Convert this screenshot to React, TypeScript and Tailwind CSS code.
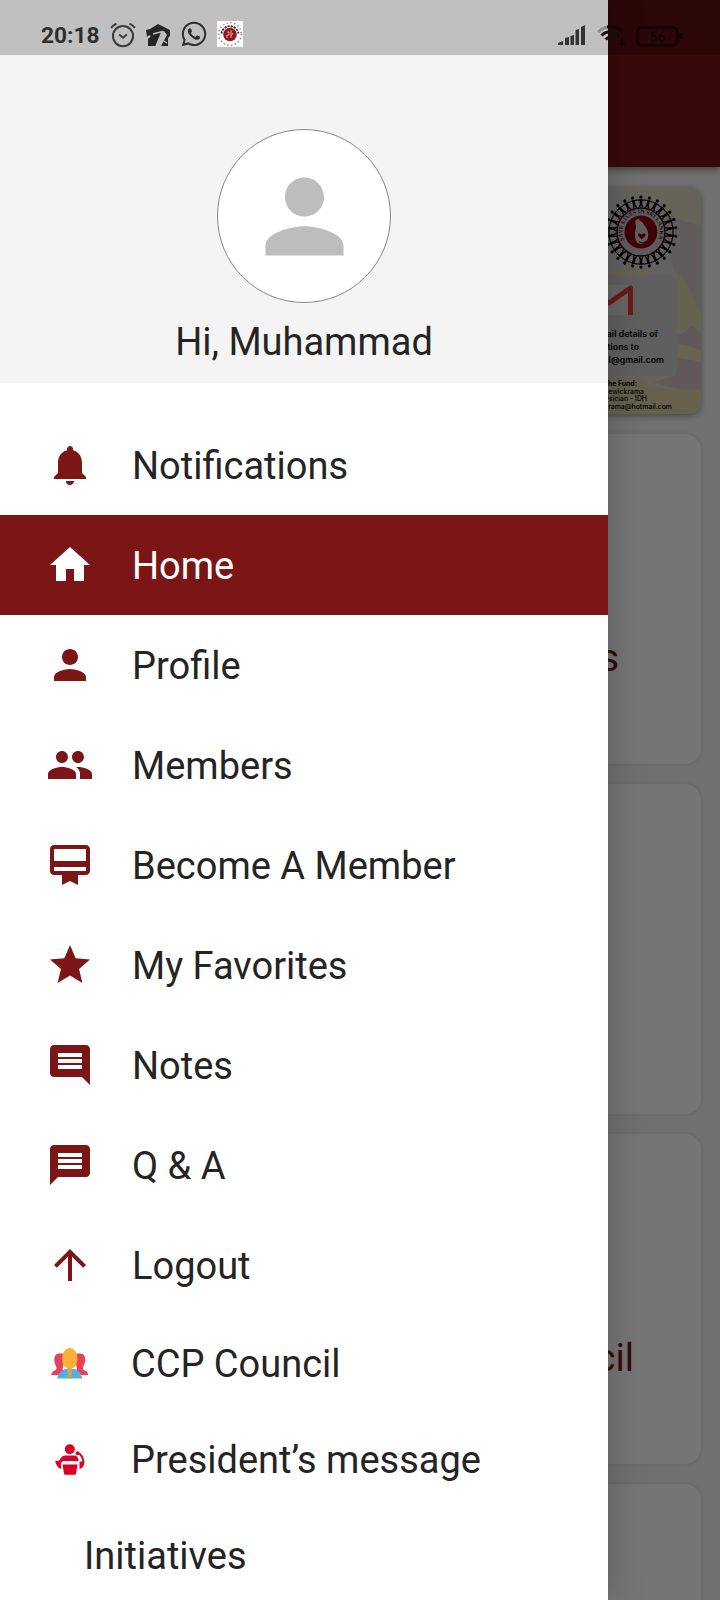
import type { ReactNode } from "react";
import {
  MdArrowUpward,
  MdCardMembership,
  MdComment,
  MdHome,
  MdMessage,
  MdNotifications,
  MdPeople,
  MdPerson,
  MdStar,
} from "react-icons/md";
import { FaWhatsapp } from "react-icons/fa";

function CouncilIcon() {
  return (
    <svg viewBox="0 0 38 31" className="h-[31px] w-[38px]">
      <path
        d="M9 5.500C5 5 3 8 3.300 12.500c.3 4 2.500 6 2.200 8C5 23.500.5 22 .3 27h36.900c-.2-5-4.700-3.500-5.200-6.500-.3-2 1.900-4 2.200-8C34.500 8 32.500 5 28.500 5.500z"
        fill="#e9405c"
      />
      <path d="M12.500 16h12.500l1 5.500-7.200 3-7.300-3z" fill="#fff" />
      <path d="M6 30.500c1.500-5 4-8 8-9.500h9.500c4.500 1.500 6.500 4.500 8 9.500z" fill="#55aee0" />
      <path d="M16.500 18h4.500v12.500h-4.500z" fill="#c2a765" />
      <ellipse cx="18.800" cy="10.500" rx="7.800" ry="10.500" fill="#f9b233" />
    </svg>
  );
}

function PresidentIcon() {
  return (
    <svg viewBox="0 0 30 31" className="h-[31px] w-[30px]" fill="#d80027">
      <circle cx="14.800" cy="5.200" r="5" />
      <path d="M10 11.500h10c2 0 3 2 3.800 5.500H9c-2 0-3 1-3 3v5c-3-1-5-4-5.800-8l4.300-.5c1-3 3-5 5.500-5z" />
      <path d="M7.500 20.500h15l-1.500 9a1.500 1.500 0 0 1-1.500 1.300h-9A1.500 1.500 0 0 1 9 29.500z" />
      <path d="M24.500 25v-7.500h4.800c0 4-1.300 6.500-4.800 7.500z" />
      <path d="M23 9c4 2 5 5 5.500 9" fill="none" stroke="#d80027" strokeWidth="2" />
      <circle cx="22.500" cy="9.200" r="1.900" />
    </svg>
  );
}

type Item = { label: string; icon: ReactNode; active?: boolean; short?: boolean };

const items: Item[] = [
  { label: "Notifications", icon: <MdNotifications size={48} /> },
  { label: "Home", icon: <MdHome size={48} />, active: true },
  { label: "Profile", icon: <MdPerson size={48} /> },
  { label: "Members", icon: <MdPeople size={48} /> },
  { label: "Become A Member", icon: <MdCardMembership size={48} /> },
  { label: "My Favorites", icon: <MdStar size={48} /> },
  { label: "Notes", icon: <MdComment size={48} /> },
  { label: "Q & A", icon: <MdMessage size={48} /> },
  { label: "Logout", icon: <MdArrowUpward size={48} /> },
  { label: "CCP Council", icon: <CouncilIcon />, short: true },
  { label: "President’s message", icon: <PresidentIcon />, short: true },
];

function MenuRow({ item }: { item: Item }) {
  return (
    <div
      className={`flex items-center pl-[46px] ${item.short ? "h-24" : "h-[100px]"} ${
        item.active ? "bg-[#7b1516] text-white" : "text-[#242424]"
      }`}
    >
      <span
        className={`flex size-12 items-center justify-center ${
          item.active ? "text-white" : "text-[#7b1516]"
        }`}
      >
        {item.icon}
      </span>
      <span className={`pt-0.5 ${item.short ? "ml-[37px]" : "ml-[38px]"}`}>{item.label}</span>
    </div>
  );
}

const people = Array.from({ length: 26 }, (_, i) => (i * 360) / 26);

function Emblem() {
  return (
    <svg viewBox="-37 -37 74 74" className="size-[74px]">
      {people.map((a) => (
        <g key={a} transform={`rotate(${a})`} stroke="#000" strokeWidth="1.500" fill="none">
          <circle cx="0" cy="-35" r="1.600" fill="#000" stroke="none" />
          <path d="M-3.800-31.800L0-32.200l3.800.4" strokeWidth="1.200" />
          <path d="M0-33v5" strokeWidth="2.600" />
          <path d="M-1.700-24.500L0-29l1.700 4.500" />
        </g>
      ))}
      <circle r="24" fill="#cfc6ca" stroke="#3a0508" strokeWidth="1.500" />
      <circle r="16.500" fill="#8e0410" />
      <path
        d="M-5-12c2-2 4-1 4 1 2 0 3 2 4 4 3 3 5 8 4 12-1 5-4 7-7 7-5 0-6-5-6-10 0-4 1-5 1-8-1-3-1-5 0-6z"
        fill="#d3cccd"
      />
      <path d="M-3 2c1.500-1.500 3 0 3.500 1C1 2 3 .5 4.500 2 5 4.500 2 5.500.8 7.500-.5 5.500-3.500 4.500-3 2z" fill="#7e0010" />
      <path d="M-2 9.500c2 1.500 5 1.500 7 0" stroke="#333" strokeWidth="1.200" fill="none" />
      <defs>
        <path id="ring" d="M-17 8A18.800 18.800 0 1 1 17 8" />
      </defs>
      <text fontSize="5.600" fontWeight="700" fill="#222" fontFamily="Liberation Serif, serif">
        <textPath href="#ring" textLength="74">
          SAVE LIVES IN SRI LANKA
        </textPath>
      </text>
    </svg>
  );
}

function Banner() {
  return (
    <div className="relative h-[227px] w-full overflow-hidden rounded-xl bg-[#dbd3d3] shadow-[0_2px_6px_rgba(0,0,0,0.35)]">
      <svg viewBox="0 0 140 227" className="absolute top-0 right-0 h-[227px] w-[140px]">
        <path d="M60 0h80v38c-14-2-24-6-34-14S80 8 60 0z" fill="#dfd8bf" />
        <path d="M106 24c10 8 20 12 34 14v92c-14-14-22-32-28-50-4-14-8-36-6-56z" fill="#d6c6c9" />
        <path d="M47 88c8-4 14-8 22-8s16 4 24 8z" fill="#dfd6b0" />
        <path d="M114 84c12 10 20 26 26 44v18c-6-2-8-8-12-6s-6 8-14 0z" fill="#dfd6b0" />
        <path d="M128 141c4-4 8 2 12 5v22l-24-8v-12c6 0 9-4 12-7z" fill="#d3bfc3" />
        <path d="M114 157c10 0 18 4 26 6v12c-10-2-18-4-26-4z" fill="#e2d9b0" />
        <path d="M114 171c8 0 16 2 26 4v28c-20 2-34-4-48-8l22-6z" fill="#d3bfc3" />
        <path d="M20 198c24-8 46-8 66-1 18 6 34 6 54 5v25H20z" fill="#ddd3a6" />
      </svg>
      <div className="absolute top-[88px] right-6 h-[101px] w-[180px] rounded-lg bg-[#cfcfd1]" />
      <div className="absolute top-[8px] right-[23px]">
        <Emblem />
      </div>
      <svg viewBox="0 0 48 32" className="absolute top-[97px] right-[68px] h-8 w-12">
        <path d="M2 1h44v30H2z" fill="#dedede" />
        <path
          d="M2.500 31V4L24 19 45.500 4v27"
          fill="none"
          stroke="#ec3a2e"
          strokeWidth="5"
          strokeLinejoin="round"
        />
      </svg>
      <div className="absolute top-[141px] right-[37px] font-[Inter] text-[8.800px] leading-[12.800px] font-semibold text-black">
        <p className="pr-[6px] text-right">Please email details of</p>
        <p className="pr-[25px] text-right">donations to</p>
        <p className="text-right">ccpsl@gmail.com</p>
      </div>
      <div className="absolute top-[193px] right-[29px] font-[Inter] text-[6.900px] leading-[7.500px] font-medium text-black">
        <p className="pr-[35px] text-right font-bold">Managing the Fund:</p>
        <p className="pr-[28px] text-right">Dr. A Jayewickrama</p>
        <p className="pr-[25px] text-right">Physician - IDH</p>
        <p className="text-right">jayewickrama@hotmail.com</p>
      </div>
    </div>
  );
}

function HomeCard({ label = "", pad = "" }: { label?: string; pad?: string }) {
  return (
    <div
      className={`h-[330px] shrink-0 rounded-2xl bg-white pt-[199px] text-right text-[38px] leading-[50px] text-[#7b1516] shadow-[0_0_5px_rgba(0,0,0,0.12)] ${pad}`}
    >
      {label}
    </div>
  );
}

function SystemIcons() {
  return (
    <div className="absolute inset-x-0 top-0 flex h-[55px] items-end pb-[8px] pl-[41px] text-[#2f2f2f]">
      <span className="w-[59px] translate-y-0.5 text-[22.700px] leading-[26px] font-bold">20:18</span>
      <svg viewBox="0 0 24 24" className="ml-[10px] size-[26px] translate-y-px" fill="none" stroke="#3a3a3a" strokeWidth="1.800">
        <circle cx="12" cy="13" r="9.300" />
        <path d="M8.500 11.500L12 14.500l3.500-3M1 5.500C2.500 3.500 4 2.500 6 1.500M23 5.500c-1.500-2-3-3-5-4" />
      </svg>
      <svg viewBox="0 0 26 24" className="ml-[9px] h-6 w-[26px]" fill="#262626">
        <path d="M1 7l4-1 8-5 7 3.500 5 2.500v6l-2 2v8h-7l6-11-3-4-9 2.500-3 3.500-3-2-2 2z" />
        <path d="M3 16l6-6 8-1-6 14H3z" />
        <path d="M8 11l9-2.500L11 23M16 16l6 4" fill="none" stroke="#c0c0c0" strokeWidth="1.300" />
      </svg>
      <FaWhatsapp size={28} className="ml-[9px] translate-y-px" />
      <svg viewBox="0 0 26 26" className="ml-[9px] size-[26px]">
        <path d="M0 0h26v26H0z" fill="#fff" />
        <circle cx="13" cy="13" r="11.300" fill="none" stroke="#a88488" strokeWidth="1.500" strokeDasharray="1.500 2.300" />
        <path d="M4.500 12.500a8.600 8.600 0 0 1 17 0" fill="none" stroke="#5a1a20" strokeWidth="1.800" strokeDasharray="2.200 1" />
        <circle cx="13" cy="13.500" r="6.800" fill="#8e1a20" />
        <path d="M10 11h2v3h-2v3M14 9v8M16 12l-2 3" stroke="#e0a8a8" fill="none" />
      </svg>
      <svg viewBox="0 0 28 20" className="ml-[315px] h-5 w-7 shrink-0 -translate-y-0.5" fill="#333">
        <path d="M0 20v-2l5-2v4zM7 20v-7l4-1v8zM12.500 20v-9l3.500-1v10zM17.500 20V5l3.500-1v16zM23 20V2l4-2v20z" />
      </svg>
      <svg viewBox="0 0 28 22" className="ml-[11px] h-[22px] w-7 shrink-0" fill="none" strokeWidth="3">
        <path d="M1 7Q5 3 10 2" stroke="#8a8a8a" />
        <path d="M10 2q9-1 16 5" stroke="#1b0505" />
        <path d="M4.500 10.500c5-5 13-5 18 0M8.500 14.500c3-3 7-3 10 0" stroke="#1d0a0a" />
        <circle cx="13.500" cy="18" r="2" fill="#1d0a0a" />
        <path d="M25 13v7M22.500 18l2.500 2.500 2.500-2.500" stroke="#120202" strokeWidth="1.500" />
      </svg>
      <div className="ml-[11px] flex h-[21px] w-[43px] shrink-0 items-center justify-center rounded-md border-[3px] border-[#140203] text-[14px] leading-none font-bold text-[#140203]">
        56
      </div>
      <div className="mb-2 h-[6px] w-1 rounded-r bg-[#140203]" />
    </div>
  );
}

export default function App() {
  return (
    <div className="relative h-[1600px] w-[720px] overflow-hidden bg-[#f4f4f4] font-[Roboto,sans-serif]">
      <div className="flex h-full flex-col">
        <div className="relative h-[167px] shrink-0 bg-[#7b1516] shadow-[0_3px_7px_rgba(0,0,0,0.4)]" />
        <div className="flex flex-col gap-5 pt-5 pr-[19px] pl-5">
          <Banner />
          <HomeCard label="Events" pad="pr-[82px]" />
          <HomeCard />
          <HomeCard label="Council" pad="pr-[67px]" />
          <HomeCard />
        </div>
      </div>

      <div className="absolute inset-0 bg-black/54" />

      <div className="absolute inset-y-0 left-0 flex w-[608px] flex-col bg-white text-[38px] leading-[50px] shadow-[0_0_36px_rgba(0,0,0,0.22)]">
        <div className="flex h-[383px] shrink-0 flex-col items-center bg-[#f4f4f4] pt-[129px]">
          <div className="flex size-[174px] items-center justify-center rounded-full border border-[#888] bg-white text-[#bdbdbd]">
            <MdPerson size={117} />
          </div>
          <p className="mt-[14px] text-[#242424]">Hi, Muhammad</p>
        </div>
        <div className="flex flex-col pt-8">
          {items.map((item) => (
            <MenuRow key={item.label} item={item} />
          ))}
          <div className="flex h-24 shrink-0 items-center pt-0.5 pl-[84px] text-[#242424]">Initiatives</div>
        </div>
      </div>

      <div className="absolute inset-x-0 top-0 h-[55px] bg-black/21" />
      <SystemIcons />
    </div>
  );
}
